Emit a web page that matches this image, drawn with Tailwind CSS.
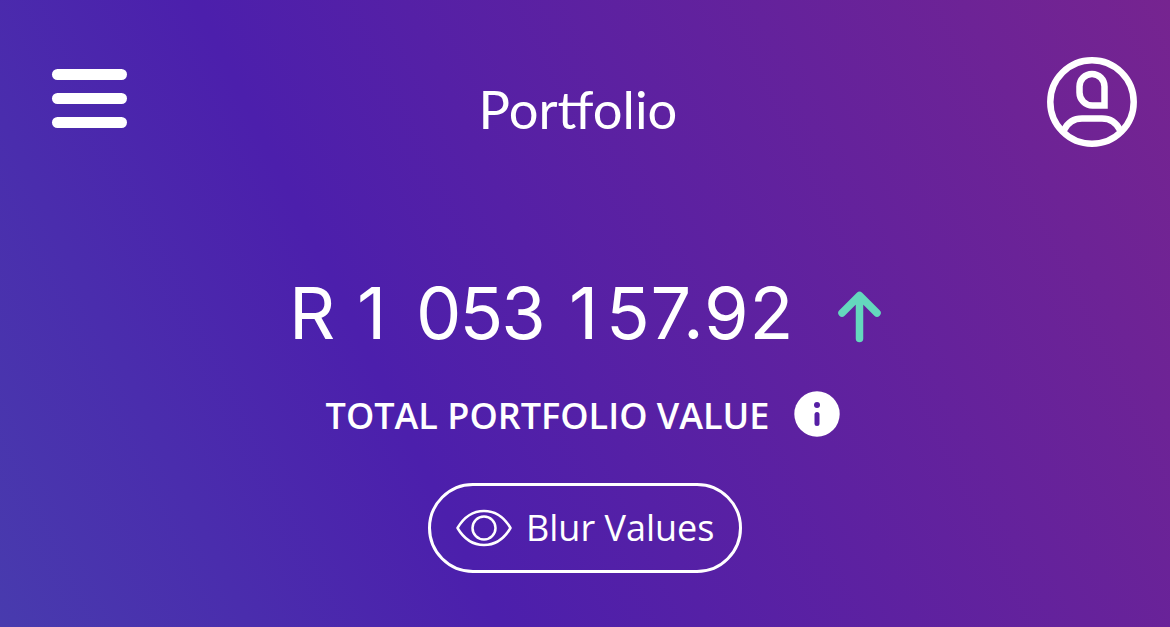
<!DOCTYPE html>
<html lang="en">
<head>
    <meta charset="UTF-8">
    <meta name="viewport" content="width=device-width, initial-scale=1.0">
    <title>Portfolio</title>
    <script src="https://cdn.jsdelivr.net/npm/@tailwindcss/browser@4"></script>
</head>
<body class="h-[627px] overflow-hidden bg-[linear-gradient(64deg,#483bae_0%,#4c1fac_34%,#762490_100%)] text-white">

    <header class="flex justify-between pl-[52px] pr-[33px] pt-[57px]">
        <button class="mt-3 flex h-[59px] w-[75px] flex-col justify-between" aria-label="Menu">
            <span class="h-[11px] w-full rounded-full bg-white"></span>
            <span class="h-[11px] w-full rounded-full bg-white"></span>
            <span class="h-[11px] w-full rounded-full bg-white"></span>
        </button>
        <h1 class="mt-[22px] mr-[18px] h-[60px] font-['Lato',sans-serif] text-[52.5px] leading-[60px]">Portfolio</h1>
        <button aria-label="Profile">
            <svg class="size-[90px]" viewBox="0 0 90 90" fill="none" stroke="white" stroke-width="6.5">
                <circle cx="45" cy="45" r="41.7"/>
                <path d="M57.500 48.500V29.500a12.500 12.500 0 0 0-25 0v6a13 13 0 0 0 13 13z"/>
                <path d="M17 73C21 65 28 61.500 35 61.500h20c7 0 14 3.500 18 11.500"/>
            </svg>
        </button>
    </header>

    <main class="flex flex-col items-center">
        <div class="mt-[122px] flex h-[88px] w-[592px] items-center justify-between">
            <p class="flex font-['Inter',sans-serif] text-[72px] leading-[88px] whitespace-nowrap">
                <span class="w-[68px]">R</span>
                <span class="w-[59px]">1</span>
                <span class="w-[153px] tracking-[-2px]">053</span>
                <span class="w-[37px]">1</span>
                <span class="tracking-[0.75px]">57.92</span>
            </p>
            <svg class="mt-2 h-[52px] w-[44px] shrink-0" viewBox="0 0 44 52" fill="none" stroke="#64d8bd" stroke-width="7.5" stroke-linecap="round" stroke-linejoin="round">
                <path d="M22.500 47.500V5M5 22 22.500 4.500 40 22"/>
            </svg>
        </div>

        <div class="mt-8 mr-1 flex h-[50px] items-center gap-[25px]">
            <p class="mt-1 font-['Open_Sans',sans-serif] text-[36px] font-semibold whitespace-nowrap">TOTAL PORTFOLIO VALUE</p>
            <svg class="size-[46px] shrink-0" viewBox="0 0 46 46">
                <circle cx="23" cy="23" r="22.7" fill="white"/>
                <circle cx="23" cy="14" r="3" fill="#561fa5"/>
                <path d="M23 23.500v9" stroke="#561fa5" stroke-width="5" stroke-linecap="round"/>
            </svg>
        </div>

        <button class="mt-[44px] flex h-[90px] w-[314px] items-center gap-[14px] rounded-full border-3 border-white pl-6">
            <svg class="h-[38px] w-[57px] shrink-0" viewBox="0 0 57 38" fill="none" stroke="white" stroke-width="2.5">
                <path d="M2.500 19C9 8 18 2 29 2S49 8 55.500 19C49 30 40 36 29 36S9 30 2.500 19z" stroke-linejoin="round"/>
                <circle cx="29" cy="19" r="11.5"/>
            </svg>
            <span class="font-['Open_Sans',sans-serif] text-[36px] whitespace-nowrap">Blur Values</span>
        </button>
    </main>

</body>
</html>
